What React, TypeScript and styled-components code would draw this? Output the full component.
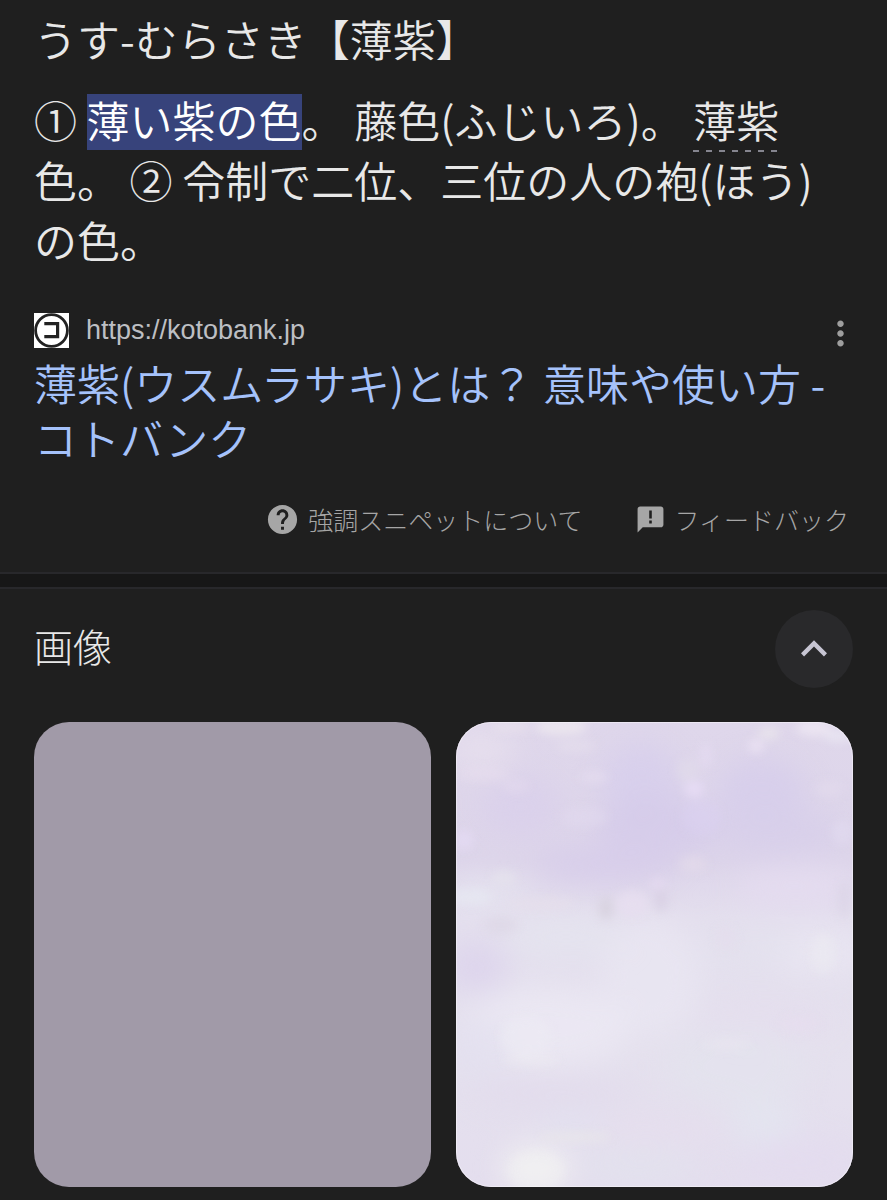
import React from "react";
import styled, { createGlobalStyle } from "styled-components";
import { MdExpandLess, MdHelp, MdMoreVert } from "react-icons/md";

const GlobalStyle = createGlobalStyle`
  * { box-sizing: border-box; }
  body {
    margin: 0;
    background: #1f1f1f;
    color: #e8e8e8;
    font-family: "Noto Sans CJK JP", sans-serif;
    font-weight: 350;
  }
`;

const Snippet = styled.article`
  display: flex;
  flex-direction: column;
  padding: 8px 34px 35px;
`;

const Term = styled.h2`
  margin: 0 0 21px;
  font-size: 43px;
  font-weight: 350;
  line-height: 60px;
`;

const Definition = styled.p`
  margin: 0;
  font-size: 43px;
  line-height: 60px;
`;

const Highlight = styled.mark`
  display: inline-block;
  margin-bottom: -4px;
  padding-bottom: 6px;
  line-height: 50px;
  color: #fff;
  background: #37437b;
`;

const Lookup = styled.span`
  display: inline-block;
  margin-bottom: -4px;
  padding-bottom: 3px;
  background: repeating-linear-gradient(90deg, #85858f 0 6px, transparent 6px 13px) left bottom / 100% 2px no-repeat;
`;

const Source = styled.div`
  display: flex;
  align-items: center;
  height: 40px;
  margin-top: 41px;
`;

const Favicon = styled.svg`
  flex: none;
  width: 35px;
  height: 35px;
  margin-right: 17px;
`;

const SourceUrl = styled.cite`
  flex: 1;
  font: normal 27px/36px "Liberation Sans", sans-serif;
  color: #bdbfc3;
`;

const IconButton = styled.button`
  display: grid;
  place-items: center;
  padding: 0;
  border: 0;
  background: none;
  color: #9e9e9e;
  cursor: pointer;
`;

const MoreButton = styled(IconButton)`
  width: 40px;
  height: 40px;
  margin: 6px -7px 0 0;
`;

const ResultLink = styled.a`
  margin-top: 5px;
  font-size: 43px;
  line-height: 55px;
  color: #a5c2fb;
  text-decoration: none;
`;

const SnippetFooter = styled.footer`
  display: flex;
  justify-content: flex-end;
  gap: 53px;
  margin-top: 36px;
  padding-right: 4px;
`;

const FooterLink = styled.a`
  display: flex;
  align-items: center;
  gap: 8px;
  font-size: 25px;
  font-weight: 300;
  line-height: 36px;
  color: #a6a6a6;
  text-decoration: none;
`;

const Divider = styled.hr`
  height: 17px;
  margin: 0;
  border: solid #28282b;
  border-width: 2px 0;
  background: #171717;
`;

const Images = styled.section`
  padding: 21px 34px 13px;
`;

const ImagesHeader = styled.header`
  display: flex;
  align-items: center;
  justify-content: space-between;
  margin-bottom: 34px;
`;

const ImagesTitle = styled.h2`
  margin: 0;
  padding-bottom: 8px;
  font-size: 39px;
  font-weight: 300;
  line-height: 56px;
`;

const CollapseButton = styled(IconButton)`
  width: 78px;
  height: 78px;
  border-radius: 50%;
  background: #29292b;
  color: #c7c5d3;
`;

const ImageGrid = styled.div`
  display: grid;
  grid-template-columns: 1fr 1fr;
  gap: 25px;
`;

const Tile = styled.a`
  display: block;
  overflow: hidden;
  aspect-ratio: 397 / 465;
  border-radius: 35px;
  background: #a19aa8;
`;

const Picture = styled.svg`
  display: block;
  width: 100%;
  height: 100%;
`;

// Soft colour patches of the watercolour: [x, y, rx, ry, colour, opacity]
type Patch = [number, number, number, number, string, number];

const broadPatches: Patch[] = [
  [185, 60, 40, 40, "#d6cdec", 0.7],
  [200, 105, 60, 32, "#d4caea", 0.8],
  [305, 70, 45, 35, "#d6cdeb", 0.8],
  [320, 110, 65, 26, "#d7ceea", 0.8],
  [65, 85, 40, 30, "#d9d0eb", 0.8],
  [150, 142, 70, 20, "#d7cdea", 0.9],
  [20, 245, 32, 25, "#ddd4ec", 0.9],
  [30, 172, 45, 15, "#e5e3f0", 0.9],
  [110, 215, 65, 22, "#e4e3ee", 0.9],
  [195, 255, 50, 60, "#eae7f2", 0.7],
  [90, 305, 85, 40, "#ebe8f3", 0.9],
  [360, 230, 50, 24, "#e9e6f2", 0.9],
  [290, 225, 50, 24, "#e4e1ee", 0.8],
  [310, 300, 70, 20, "#e5dded", 0.8],
  [25, 325, 30, 30, "#e2dff0", 0.7],
  [280, 345, 70, 40, "#e3e2ed", 0.9],
  [95, 372, 85, 18, "#e2dbec", 0.9],
  [200, 410, 70, 16, "#e5deed", 0.9],
  [115, 402, 30, 14, "#e2e1f0", 0.8],
  [310, 402, 35, 24, "#e3e4ef", 0.9],
  [80, 446, 36, 24, "#f1f0f2", 0.9],
  [180, 445, 60, 20, "#e2e1ed", 0.9],
  [345, 440, 60, 26, "#e3dcee", 0.9],
  [25, 28, 34, 22, "#e7e0ed", 0.8],
  [340, 165, 60, 22, "#e4dcef", 0.9],
];

const finePatches: Patch[] = [
  [105, 5, 26, 8, "#eee8ef", 0.8],
  [55, 5, 20, 5, "#e9e3ec", 0.7],
  [120, 24, 20, 6, "#e6dfed", 0.6],
  [300, 24, 8, 7, "#eae1f3", 0.9],
  [313, 11, 11, 6, "#e9e4ec", 0.9],
  [358, 6, 18, 8, "#ece6f2", 0.9],
  [382, 14, 14, 6, "#eae7f3", 0.8],
  [238, 67, 10, 8, "#e7dcf5", 0.9],
  [232, 48, 11, 12, "#e0d9ea", 0.8],
  [250, 34, 6, 12, "#e5dcf2", 0.7],
  [138, 55, 14, 6, "#e6ddf0", 0.7],
  [60, 64, 14, 6, "#e4dbee", 0.6],
  [28, 52, 26, 6, "#e8ddee", 0.6],
  [128, 95, 24, 10, "#e1d8ef", 0.6],
  [245, 95, 20, 18, "#dbd1f1", 0.5],
  [373, 67, 14, 8, "#e3daec", 0.7],
  [386, 110, 10, 12, "#e1daf0", 0.7],
  [8, 118, 9, 10, "#e6dcf5", 0.7],
  [14, 175, 22, 8, "#e6e7f1", 0.8],
  [48, 156, 12, 7, "#e5e2ec", 0.8],
  [237, 142, 14, 8, "#e2d9ea", 0.8],
  [85, 182, 34, 7, "#e6deeb", 0.7],
  [150, 186, 8, 12, "#d8d3e0", 0.9],
  [176, 182, 16, 13, "#e7def0", 0.9],
  [205, 178, 7, 12, "#d8d0e3", 0.8],
  [202, 162, 9, 6, "#e5daf0", 0.8],
  [45, 203, 17, 9, "#dcd5e4", 0.6],
  [388, 178, 6, 18, "#d9d2e5", 0.6],
  [270, 216, 10, 12, "#e4dcec", 0.6],
  [367, 231, 12, 20, "#ebeaf1", 0.7],
  [343, 302, 20, 8, "#e7ddf0", 0.5],
  [271, 322, 24, 6, "#e9e6f0", 0.6],
  [70, 315, 26, 20, "#edebf3", 0.6],
  [75, 338, 28, 6, "#edebf2", 0.5],
  [120, 415, 36, 5, "#e9e6ea", 0.8],
  [80, 449, 28, 20, "#f2f2f1", 0.5],
];

const Patches = ({ items }: { items: Patch[] }) => (
  <>
    {items.map(([cx, cy, rx, ry, fill, opacity]) => (
      <ellipse key={`${cx}-${cy}`} cx={cx} cy={cy} rx={rx} ry={ry} fill={fill} opacity={opacity} />
    ))}
  </>
);

const Watercolour = () => (
  <Picture viewBox="0 0 397 465" preserveAspectRatio="none" aria-hidden="true">
    <defs>
      <linearGradient id="wash" x1="0" y1="0" x2="0" y2="1">
        <stop offset="0" stopColor="#dfd7eb" />
        <stop offset="0.3" stopColor="#ddd5ea" />
        <stop offset="0.42" stopColor="#e4dfee" />
        <stop offset="0.7" stopColor="#e5e1ee" />
        <stop offset="1" stopColor="#e4deee" />
      </linearGradient>
      <filter id="broad" x="-20%" y="-20%" width="140%" height="140%" colorInterpolationFilters="sRGB">
        <feGaussianBlur stdDeviation="14" />
      </filter>
      <filter id="fine" x="-20%" y="-20%" width="140%" height="140%" colorInterpolationFilters="sRGB">
        <feGaussianBlur stdDeviation="5" />
      </filter>
    </defs>
    <rect width="397" height="465" fill="url(#wash)" />
    <g filter="url(#broad)"><Patches items={broadPatches} /></g>
    <g filter="url(#fine)"><Patches items={finePatches} /></g>
    <rect x="0.5" y="0.5" width="396" height="464" rx="34.5" fill="none" stroke="#fff" strokeOpacity="0.4" />
  </Picture>
);

const FeedbackIcon = () => (
  <svg width="31" height="31" viewBox="0 0 24 24" fill="currentColor" aria-hidden="true">
    <path d="M20 2H4c-1.1 0-2 .9-2 2v18l4-4h14c1.1 0 2-.9 2-2V4c0-1.1-.9-2-2-2zm-7 13h-2v-2.2h2zm0-3.8h-2V5h2z" />
  </svg>
);

export default function App() {
  return (
    <main lang="ja">
      <GlobalStyle />
      <Snippet>
        <Term>うす-むらさき【薄紫】</Term>
        <Definition>
          ① <Highlight>薄い紫の色</Highlight>。 藤色(ふじいろ)。 <Lookup>薄紫</Lookup>色。 ② 令制で二位、三位の人の袍(ほう)の色。
        </Definition>
        <Source>
          <Favicon viewBox="0 0 35 35" aria-hidden="true">
            <rect width="35" height="35" fill="#fff" />
            <circle cx="17.5" cy="17.5" r="15.9" fill="#fff" stroke="#222" strokeWidth="2.8" />
            <path d="M10.3 10.6H23.6V23.6H10.3" fill="none" stroke="#222" strokeWidth="3.2" />
          </Favicon>
          <SourceUrl>https://kotobank.jp</SourceUrl>
          <MoreButton type="button" aria-label="その他">
            <MdMoreVert size={39} />
          </MoreButton>
        </Source>
        <ResultLink href="#kotobank">薄紫(ウスムラサキ)とは？ 意味や使い方 - コトバンク</ResultLink>
        <SnippetFooter>
          <FooterLink href="#about">
            <MdHelp size={35} />
            強調スニペットについて
          </FooterLink>
          <FooterLink href="#feedback">
            <FeedbackIcon />
            フィードバック
          </FooterLink>
        </SnippetFooter>
      </Snippet>
      <Divider />
      <Images>
        <ImagesHeader>
          <ImagesTitle>画像</ImagesTitle>
          <CollapseButton type="button" aria-label="閉じる">
            <MdExpandLess size={52} />
          </CollapseButton>
        </ImagesHeader>
        <ImageGrid>
          <Tile href="#image-1" aria-label="薄紫の色見本" />
          <Tile href="#image-2" aria-label="薄紫の水彩">
            <Watercolour />
          </Tile>
        </ImageGrid>
      </Images>
    </main>
  );
}
